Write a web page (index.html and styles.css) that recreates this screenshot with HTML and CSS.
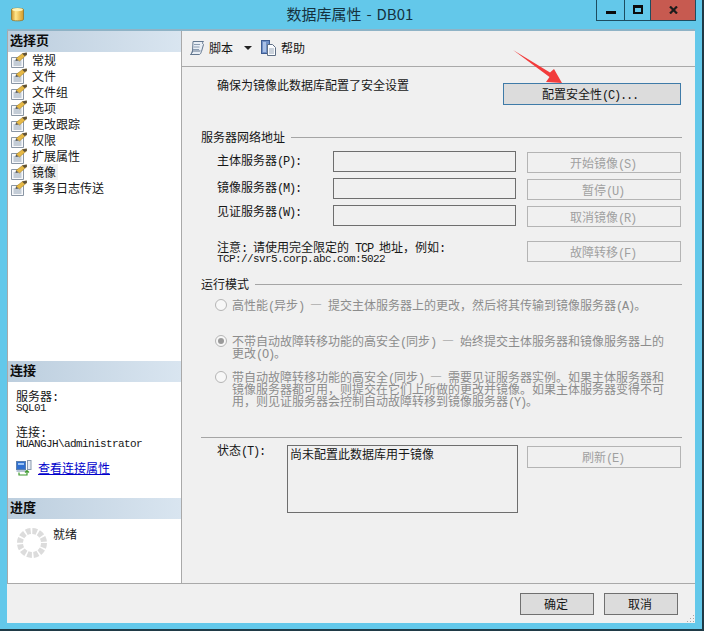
FILE: index.html
```html
<!DOCTYPE html>
<html lang="zh-CN">
<head>
<meta charset="utf-8">
<title>数据库属性 - DB01</title>
<link rel="stylesheet" href="styles.css">
</head>
<body>
<svg class="defs" width="0" height="0" aria-hidden="true">
  <defs>
    <symbol id="page" viewBox="0 0 16 16">
      <path d="M.5 5.5h12v10H.5z" fill="#f8f9fb" stroke="#8a96a4"/>
      <path d="M2.5 9h8M2.5 11h8M2.5 13h8" stroke="#8fa0b2"/>
      <path d="M5 6.5 11.5 1.5 15.5 1 15.5 3 8.5 9z" fill="#e6b845" stroke="#9a7722" stroke-width=".5"/>
      <path d="M11 1.5 15.8 .5 15.8 3 13.5 4z" fill="#5d5038"/>
      <path d="M5 6.5 4.5 9 7.5 8.5z" fill="#555"/>
    </symbol>
  </defs>
</svg>
<div class="window">
  <header class="titlebar">
    <svg class="db-icon" width="13" height="15" viewBox="0 0 13 15">
      <defs>
        <linearGradient id="gold" x1="0" x2="1" y1="0" y2="0">
          <stop offset="0" stop-color="#c9932a"/>
          <stop offset=".35" stop-color="#ffe68a"/>
          <stop offset="1" stop-color="#d59a28"/>
        </linearGradient>
      </defs>
      <path d="M.5 2.5C.5.8 12.5.8 12.5 2.5v10c0 1.8-12 1.8-12 0z" fill="url(#gold)" stroke="#8f6d20" stroke-width=".7"/>
      <ellipse cx="6.5" cy="2.6" rx="5.4" ry="1.6" fill="#fff4b8"/>
    </svg>
    <h1 class="title">数据库属性 - DB01</h1>
    <div class="controls">
      <div class="ctl ctl-min"><span class="glyph-min"></span></div>
      <div class="ctl ctl-max"><span class="glyph-max"></span></div>
      <div class="ctl ctl-close">
        <svg width="9" height="8" viewBox="0 0 9 8"><path d="M1 .5 8 7.5M8 .5 1 7.5" stroke="#1c1c1c" stroke-width="2.2"/></svg>
      </div>
    </div>
  </header>

  <div class="client">
    <div class="body">
      <aside class="side">
        <section class="side-pages">
          <h2 class="side-head">选择页</h2>
          <ul class="pages">
            <li class="page-item"><svg class="pi" width="16" height="16"><use href="#page"/></svg><span class="page-name">常规</span></li>
            <li class="page-item"><svg class="pi" width="16" height="16"><use href="#page"/></svg><span class="page-name">文件</span></li>
            <li class="page-item"><svg class="pi" width="16" height="16"><use href="#page"/></svg><span class="page-name">文件组</span></li>
            <li class="page-item"><svg class="pi" width="16" height="16"><use href="#page"/></svg><span class="page-name">选项</span></li>
            <li class="page-item"><svg class="pi" width="16" height="16"><use href="#page"/></svg><span class="page-name">更改跟踪</span></li>
            <li class="page-item"><svg class="pi" width="16" height="16"><use href="#page"/></svg><span class="page-name">权限</span></li>
            <li class="page-item"><svg class="pi" width="16" height="16"><use href="#page"/></svg><span class="page-name">扩展属性</span></li>
            <li class="page-item"><svg class="pi" width="16" height="16"><use href="#page"/></svg><span class="page-name page-sel">镜像</span></li>
            <li class="page-item"><svg class="pi" width="16" height="16"><use href="#page"/></svg><span class="page-name">事务日志传送</span></li>
          </ul>
        </section>
        <section class="side-conn">
          <h2 class="side-head">连接</h2>
          <div class="conn-body">
            <div class="t12">服务器<span class="l">:</span></div>
            <div class="t12 mono">SQL01</div>
            <div class="t12 gap12">连接<span class="l">:</span></div>
            <div class="t12 mono">HUANGJH\administrator</div>
            <div class="conn-link">
              <svg width="16" height="16" viewBox="0 0 16 16">
                <rect x=".5" y="1.5" width="9" height="8" fill="#2f6fd0" stroke="#5a7fae"/>
                <rect x="2" y="3" width="6" height="2" fill="#9cc4f5"/>
                <rect x=".5" y="10" width="10" height="2" fill="#b9c6d6"/>
                <rect x="11.5" y=".5" width="3.5" height="9" fill="#e6ebf2" stroke="#8a9ab0"/>
                <path d="M3 12.5v2.5h8V11M9 12.5l2-2 2 2" fill="none" stroke="#3f9a2e" stroke-width="1.2"/>
              </svg>
              <a class="link" href="#">查看连接属性</a>
            </div>
          </div>
        </section>
        <section class="side-prog">
          <h2 class="side-head">进度</h2>
          <div class="prog-body">
            <svg width="30" height="30" viewBox="0 0 30 30" class="spinner">
              <circle cx="15" cy="15" r="12" fill="none" stroke="#dcdcdc" stroke-width="6" stroke-dasharray="4.6 1.68"/>
            </svg>
            <span class="t12 prog-text">就绪</span>
          </div>
        </section>
      </aside>

      <main class="content">
        <nav class="toolbar">
          <svg width="16" height="16" viewBox="0 0 16 16" class="tb-script">
            <path d="M4 1.5h10.5c-1.3 1-1.3 2 0 3L12.5 11.5c-.6 1.6-1 2.5-2 3H1.5c1.3-1 1.5-2 2-3.5z" fill="#e8eef5" stroke="#63778f"/>
            <path d="M5 4.5h6M4.5 7h6M4 9.5h6" stroke="#8c9db2"/>
            <path d="M1.5 14.5c1-1 1.5-1.5 2-3.5h8" fill="none" stroke="#63778f"/>
          </svg>
          <span class="tb-label">脚本</span>
          <span class="tb-arrow"></span>
          <svg width="16" height="16" viewBox="0 0 16 16" class="tb-help">
            <rect x=".5" y=".5" width="8" height="13" fill="#6f8fc6" stroke="#3e5c92"/>
            <rect x="2" y="2" width="3" height="10" fill="#a9c0e6"/>
            <path d="M6.5 4.5h5l3 3v8h-8z" fill="#fbfcfe" stroke="#5f6f85"/>
            <path d="M8 9h5M8 11h5M8 13h5" stroke="#9aa8b8"/>
          </svg>
          <span class="tb-label">帮助</span>
        </nav>

        <div class="form">
          <div class="secure-row">
            <p class="t12">确保为镜像此数据库配置了安全设置</p>
            <button class="btn btn-secure" type="button">配置安全性<span class="l">(C)...</span></button>
          </div>

          <div class="group-title group-net"><span class="t12">服务器网络地址</span><span class="rule"></span></div>

          <div class="srv-rows">
            <div class="srv-row">
              <label class="srv-label">主体服务器<span class="l">(P):</span></label>
              <div class="field"></div>
              <button class="btn btn-off" type="button">开始镜像<span class="l">(S)</span></button>
            </div>
            <div class="srv-row">
              <label class="srv-label">镜像服务器<span class="l">(M):</span></label>
              <div class="field"></div>
              <button class="btn btn-off" type="button">暂停<span class="l">(U)</span></button>
            </div>
            <div class="srv-row">
              <label class="srv-label srv-label-top">见证服务器<span class="l">(W):</span></label>
              <div class="field"></div>
              <button class="btn btn-off" type="button">取消镜像<span class="l">(R)</span></button>
            </div>
          </div>

          <div class="note-row">
            <div class="note">
              <div class="t12">注意<span class="l">: </span>请使用完全限定的<span class="l"> TCP </span>地址，例如<span class="l">:</span></div>
              <div class="t12 mono">TCP://svr5.corp.abc.com:5022</div>
            </div>
            <button class="btn btn-off btn-flat" type="button">故障转移<span class="l">(F)</span></button>
          </div>

          <div class="group-title group-mode"><span class="t12">运行模式</span><span class="rule"></span></div>

          <div class="radio-row radio-a">
            <span class="radio"></span>
            <p class="radio-text">高性能<span class="l">(</span>异步<span class="l">) </span>—<span class="l"> </span>提交主体服务器上的更改，然后将其传输到镜像服务器<span class="l">(A)</span>。</p>
          </div>
          <div class="radio-row radio-b">
            <span class="radio radio-on"></span>
            <p class="radio-text">不带自动故障转移功能的高安全<span class="l">(</span>同步<span class="l">) </span>—<span class="l"> </span>始终提交主体服务器和镜像服务器上的<br>更改<span class="l">(O)</span>。</p>
          </div>
          <div class="radio-row radio-c">
            <span class="radio"></span>
            <p class="radio-text">带自动故障转移功能的高安全<span class="l">(</span>同步<span class="l">) </span>—<span class="l"> </span>需要见证服务器实例。如果主体服务器和<br>镜像服务器都可用，则提交在它们上所做的更改并镜像。如果主体服务器变得不可<br>用，则见证服务器会控制自动故障转移到镜像服务器<span class="l">(Y)</span>。</p>
          </div>

          <div class="rule-full"></div>

          <div class="status-row">
            <label class="status-label">状态<span class="l">(T):</span></label>
            <div class="status-box">尚未配置此数据库用于镜像</div>
            <button class="btn btn-off btn-refresh" type="button">刷新<span class="l">(E)</span></button>
          </div>
        </div>
      </main>
    </div>

    <footer class="footer">
      <button class="btn btn-foot" type="button">确定</button>
      <button class="btn btn-foot" type="button">取消</button>
      <svg class="grip" width="8" height="8" viewBox="0 0 8 8"><path d="M6 0h1v1H6zM3 3h1v1H3zM6 3h1v1H6zM0 6h1v1H0zM3 6h1v1H3zM6 6h1v1H6z" fill="#a5a5a5"/></svg>
    </footer>
  </div>

  <svg class="red-arrow" width="52" height="36" viewBox="0 0 52 36">
    <path d="M1 1 38 23.5 42 20 50 34 34 33 37.5 28z" fill="#f23c3c"/>
  </svg>
</div>
</body>
</html>
```
FILE: styles.css
```css
* { box-sizing: border-box; }
html, body { margin: 0; padding: 0; }
body {
  width: 704px;
  height: 631px;
  overflow: hidden;
  background: #e8e8e8;
  font-family: "Noto Sans CJK SC", "Liberation Sans", sans-serif;
  font-size: 12px;
  line-height: 12px;
  color: #161616;
}
.defs { position: absolute; }
p, h1, h2, ul { margin: 0; padding: 0; }
ul { list-style: none; }

.window {
  position: relative;
  width: 704px;
  height: 631px;
  background: #63c8ea;
  border-bottom: 2px solid #1f3a46;
  border-right: 2px solid #1f3a46;
  padding: 0 7px 6px 7px;
  display: flex;
  flex-direction: column;
}
.titlebar {
  height: 29px;
  flex: none;
  margin-left: -7px;
  margin-right: -7px;
  display: flex;
  position: relative;
  justify-content: center;
}
.db-icon { position: absolute; left: 11px; top: 7px; }
.title {
  font-size: 15px;
  font-weight: 400;
  line-height: 20px;
  margin-top: 4px;
  color: #15323f;
  margin-left: -2px;
  word-spacing: 1.5px;
}
.controls {
  position: absolute;
  right: 6px;
  top: 0;
  display: flex;
  height: 21px;
  border: 1px solid #1d4d60;
  border-top: 0;
}
.ctl { display: flex; align-items: center; justify-content: center; height: 20px; }
.ctl-min { width: 28px; border-right: 1px solid #1d4d60; }
.ctl-max { width: 26px; border-right: 1px solid #1d4d60; }
.ctl-close { width: 44px; background: #c75a50; }
.glyph-min { width: 10px; height: 3px; background: #0c0c0c; margin-top: 5px; }
.glyph-max { width: 10px; height: 9px; border: 2px solid #0c0c0c; border-top-width: 3px; margin-top: -1px; }

.client {
  flex: 1;
  display: flex;
  flex-direction: column;
  background: #f0f0f0;
  border-top: 2px solid #8fb3c6;
  min-height: 0;
}
.body { flex: 1; display: flex; min-height: 0; }

.side {
  width: 175px;
  flex: none;
  background: #fff;
  border-left: 1px solid #a9a9a9;
  border-right: 1px solid #a9a9a9;
  display: flex;
  flex-direction: column;
}
.side-head {
  height: 21px;
  padding-left: 2px;
  font-size: 13px;
  line-height: 18px;
  font-weight: 700;
  color: #0c0c0c;
  background: linear-gradient(90deg, #bccede 0%, #d9e5f0 100%);
}
.side-pages { height: 330px; flex: none; }
.side-conn { height: 137px; flex: none; }
.side-prog { flex: 1; }
.page-item { height: 16px; display: flex; align-items: center; padding-left: 3px; }
.pi { flex: none; }
.page-name { margin-left: 3px; padding: 0 2px; line-height: 16px; height: 16px; }
.page-sel { background: #f0f0f0; padding-right: 2px; }

.t12 { font-size: 12px; line-height: 12px; white-space: nowrap; }
.mono { font-family: "Liberation Mono", monospace; font-size: 11px; letter-spacing: -.6px; }
.l { font-family: "Liberation Mono", monospace; font-size: 12px; letter-spacing: -1.2px; line-height: 0; white-space: pre; }
.conn-body { padding: 8px 0 0 8px; }
.gap12 { margin-top: 12px; }
.conn-link { display: flex; align-items: center; margin-top: 10px; height: 16px; gap: 6px; }
.link { color: #0000cc; text-decoration: underline; line-height: 14px; }
.prog-body { display: flex; position: relative; padding: 9px 0 0 9px; }
.spinner { flex: none; }
.prog-text { margin: 0 0 0 6px; }

.content { flex: 1; min-width: 0; display: flex; flex-direction: column; }
.toolbar {
  height: 36px;
  flex: none;
  border-bottom: 1px solid #a9a9a9;
  display: flex;
  align-items: center;
  padding: 0 0 2px 7px;
}
.tb-label { margin-left: 4px; }
.tb-arrow {
  width: 0;
  height: 0;
  border: 4px solid transparent;
  border-top: 4px solid #222;
  border-bottom: 0;
  margin: 0 9px 0 11px;
}
.form { padding: 12px 14px 0 19px; flex: 1; }

.secure-row { display: flex; justify-content: space-between; align-items: flex-start; padding-left: 16px; height: 26px; }
.btn {
  font: inherit;
  margin: 0;
  padding: 0 2px 0 0;
  display: block;
  flex: none;
  color: #161616;
  background: #dcdcdc;
  border: 1px solid #707070;
  white-space: nowrap;
}
.btn-secure { width: 178px; height: 22px; margin-top: 4px; border-color: #3f7ba8; padding-right: 4px; }

.group-title { display: flex; align-items: center; gap: 6px; height: 12px; margin-right: -1px; }
.group-net { margin-top: 26px; }
.group-mode { margin-top: 13px; }
.rule { flex: 1; height: 1px; background: #a5a5a5; }

.srv-rows { margin-top: 8px; padding-left: 16px; }
.srv-row { display: flex; height: 27px; align-items: flex-start; }
.srv-label { width: 116px; flex: none; line-height: 18px; white-space: nowrap; }
.srv-label-top { line-height: 12px; }
.field { width: 183px; height: 21px; flex: none; border: 1px solid #6e6e6e; background: #f0f0f0; }
.btn-off {
  width: 154px;
  height: 21px;
  margin: 1px 0 0 11px;
  background: #f0f0f0;
  border-color: #b4b4b4;
  color: #a0a0a0;
}
.note-row { display: flex; justify-content: space-between; margin-top: 9px; padding-left: 16px; height: 24px; align-items: flex-start; }
.btn-flat { margin-top: 0; }

.radio-row { display: flex; align-items: flex-start; padding-left: 14px; }
.radio-a { margin-top: 9px; }
.radio-b { margin-top: 24px; }
.radio-c { margin-top: 12px; }
.radio {
  width: 12px;
  height: 12px;
  flex: none;
  border-radius: 50%;
  border: 1px solid #b5b5b5;
  background: #f7f7f7;
  margin-right: 5px;
  display: flex;
  align-items: center;
  justify-content: center;
}
.radio-on::after { content: ""; width: 6px; height: 6px; border-radius: 50%; background: #9a9a9a; }
.radio-text { color: #8c8c8c; white-space: nowrap; }

.rule-full { height: 1px; background: #a5a5a5; margin: 30px -1px 0 0; }
.status-row { display: flex; align-items: flex-start; margin-top: 7px; padding-left: 16px; }
.status-label { width: 70px; flex: none; margin-top: -1px; }
.status-box { width: 231px; height: 68px; flex: none; border: 1px solid #6e6e6e; padding: 2px; }
.btn-refresh { height: 22px; margin-left: 9px; }

.footer {
  height: 40px;
  flex: none;
  position: relative;
  border-top: 1px solid #a9a9a9;
  display: flex;
  justify-content: flex-end;
  gap: 10px;
  padding: 9px 17px 0 0;
}
.btn-foot { width: 74px; height: 22px; border-color: #707070; }
.grip { position: absolute; right: 0; bottom: 0; }
.red-arrow { position: absolute; left: 512px; top: 49px; }
```
